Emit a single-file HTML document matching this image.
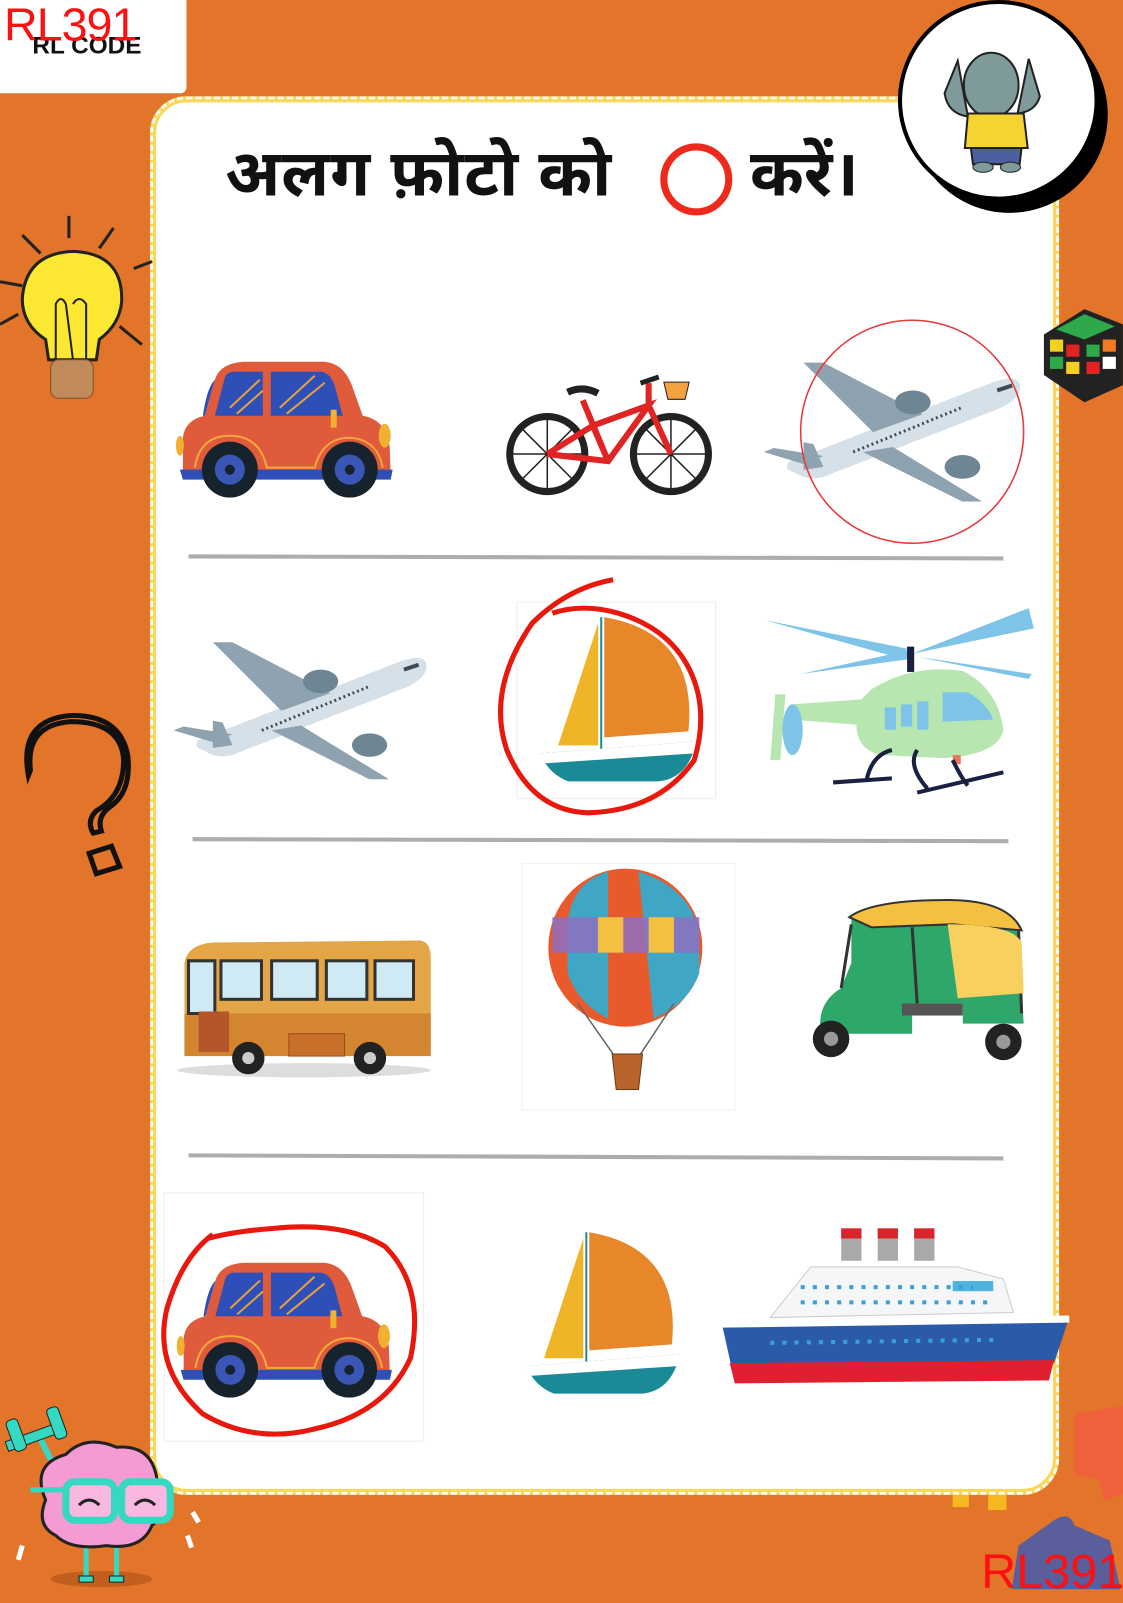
<!DOCTYPE html>
<html><head><meta charset="utf-8">
<style>
html,body{margin:0;padding:0;}
body{width:1123px;height:1589px;background:#E2752A;position:relative;overflow:hidden;font-family:"Liberation Sans",sans-serif;}
#wrap{position:absolute;left:0;top:0;width:1108px;height:1568px;transform:scale(1.0135);transform-origin:0 0;}
.codebox{position:absolute;left:0;top:0;width:184px;height:92px;background:#fff;border-radius:0 0 6px 0;}
.rl{position:absolute;left:4px;top:-6px;color:#ff1010;font-size:46px;line-height:60px;letter-spacing:-1px;}
.rlc{position:absolute;left:32px;top:32px;font-weight:bold;font-size:24px;color:#111;}
.card{position:absolute;left:148px;top:95px;width:885px;height:1368px;background:#fff;border:6px solid #F8D75A;border-radius:36px;}
.card:after{content:"";position:absolute;left:-6px;top:-6px;right:-6px;bottom:-6px;border:3px dashed #fff;border-radius:36px;opacity:.9;}
.title{position:absolute;top:134px;font-size:64px;font-weight:bold;color:#111;font-family:"Liberation Sans","Noto Sans Devanagari","Lohit Devanagari",sans-serif;white-space:nowrap;}
svg{position:absolute;left:0;top:0;}
.rl2{position:absolute;left:968px;top:1522px;color:#ff1010;font-size:48px;line-height:60px;}
</style></head><body><div id="wrap">
<div class="codebox"><div class="rlc">RL CODE</div><div class="rl">RL391</div></div>
<div class="card"></div>
<svg width="1108" height="1568" viewBox="0 0 1108 1568">
<defs>
<symbol id="car" viewBox="0 0 220 140">
 <path d="M8 115 L8 80 Q10 62 30 58 L40 22 Q45 5 70 4 L150 4 Q170 6 178 30 L188 58 Q212 62 215 90 L216 118 Z" fill="#E05A3C"/>
 <path d="M5 112 L218 112 L216 122 L8 122 Z" fill="#2E4FB8"/>
 <path d="M40 58 L50 20 Q52 14 60 14 L88 14 L88 58 Z" fill="#2E4FB8"/>
 <path d="M96 58 L96 14 L145 14 Q155 14 160 28 L168 58 Z" fill="#2E4FB8"/>
 <path d="M30 58 L40 22 Q32 30 28 58 Z" fill="#2E4FB8"/>
 <path d="M55 50 L85 22 M62 56 L88 33 M105 50 L140 18 M112 56 L150 25" stroke="#E8A23A" stroke-width="2"/>
 <path d="M20 110 Q25 78 55 78 Q85 78 92 110 L140 110 Q148 80 175 80 Q203 82 208 110" fill="none" stroke="#F2A93B" stroke-width="2"/>
 <circle cx="55" cy="112" r="28" fill="#16222c"/><circle cx="55" cy="112" r="15" fill="#3A57B8"/><circle cx="55" cy="112" r="5" fill="#16222c"/>
 <circle cx="175" cy="112" r="28" fill="#16222c"/><circle cx="175" cy="112" r="15" fill="#3A57B8"/><circle cx="175" cy="112" r="5" fill="#16222c"/>
 <ellipse cx="210" cy="78" rx="6" ry="12" fill="#F2B030"/><ellipse cx="5" cy="88" rx="4" ry="10" fill="#F2B030"/>
 <rect x="156" y="52" width="6" height="18" fill="#F2B030"/>
</symbol>
<symbol id="plane" viewBox="0 0 260 150">
 <path d="M30 120 Q20 118 25 110 L230 30 Q258 20 258 35 Q258 45 240 55 L60 125 Q45 130 30 120 Z" fill="#D5E0E8"/>
 <path d="M110 80 L40 10 L60 10 L160 62 Z" fill="#8FA2B0"/>
 <path d="M130 95 L220 150 L200 150 L100 100 Z" fill="#8FA2B0"/>
 <path d="M40 112 L0 100 L10 96 L60 104 Z" fill="#8FA2B0"/>
 <path d="M40 118 L40 90 L50 92 L60 115 Z" fill="#8FA2B0"/>
 <ellipse cx="150" cy="50" rx="18" ry="12" fill="#6E8594"/>
 <ellipse cx="200" cy="115" rx="18" ry="12" fill="#6E8594"/>
 <path d="M90 100 L200 55" stroke="#3b4a55" stroke-width="3" stroke-dasharray="2 3"/>
 <path d="M235 38 L250 33" stroke="#3b4a55" stroke-width="4"/>
</symbol>
<symbol id="boat" viewBox="0 0 160 170">
 <path d="M60 10 L60 132 L20 132 Z" fill="#F0B429"/>
 <path d="M66 4 Q160 20 150 118 L66 124 Z" fill="#E8872A"/>
 <path d="M63 4 L63 140" stroke="#1A8A96" stroke-width="2"/>
 <path d="M2 140 L158 128 Q150 165 120 168 L30 168 Q10 160 2 140 Z" fill="#1A8A96"/>
 <path d="M2 140 L158 128 L156 140 L6 150 Z" fill="#fff"/>
</symbol>
</defs>
<circle cx="687" cy="177" r="32" fill="none" stroke="#EE2A1C" stroke-width="7"/>
<!-- elephant badge -->
<circle cx="996" cy="113" r="97" fill="#000"/>
<circle cx="985" cy="99" r="97" fill="#fff" stroke="#000" stroke-width="4"/>
<g>
 <path d="M945 60 L932 92 Q935 112 955 115 Z M1015 58 L1026 95 Q1022 110 1004 112 Z" fill="#7E9A9A" stroke="#222" stroke-width="2"/>
 <ellipse cx="978" cy="84" rx="27" ry="32" fill="#7E9A9A" stroke="#222" stroke-width="2"/>
 <path d="M955 112 L1010 112 L1014 146 L952 146 Z" fill="#F5D431" stroke="#222" stroke-width="2"/>
 <path d="M958 146 L1008 146 L1006 162 L960 162 Z" fill="#4C5FA0" stroke="#222" stroke-width="2"/>
 <ellipse cx="970" cy="165" rx="10" ry="5" fill="#7E9A9A" stroke="#222"/>
 <ellipse cx="997" cy="165" rx="10" ry="5" fill="#7E9A9A" stroke="#222"/>
</g>
<line x1="186" y1="549" x2="990" y2="551" stroke="#ADADAD" stroke-width="4"/>
<line x1="190" y1="828" x2="995" y2="830" stroke="#ADADAD" stroke-width="4"/>
<line x1="186" y1="1140" x2="990" y2="1143" stroke="#ADADAD" stroke-width="4"/>
<use href="#car" x="172" y="353" width="218" height="138"/>
<g stroke="#222" fill="none">
 <circle cx="540" cy="448" r="37" stroke-width="7"/><circle cx="662" cy="448" r="37" stroke-width="7"/>
 <path d="M540 448 L540 413 M540 448 L515 423 M540 448 L505 448 M540 448 L515 473 M540 448 L540 483 M540 448 L565 473 M540 448 L575 448 M540 448 L565 423 M662 448 L662 413 M662 448 L637 423 M662 448 L627 448 M662 448 L637 473 M662 448 L662 483 M662 448 L687 473 M662 448 L697 448 M662 448 L687 423" stroke-width="1.5"/>
</g>
<path d="M540 448 L600 455 L640 400 L585 420 L540 448 M585 420 L600 455 M575 395 L600 455 M640 400 L662 448 M640 400 L640 378" stroke="#E02424" stroke-width="6" fill="none"/>
<path d="M560 387 Q575 380 590 388" stroke="#222" stroke-width="7" fill="none"/>
<path d="M632 378 L650 372" stroke="#222" stroke-width="5"/>
<path d="M655 377 L680 377 L676 394 L659 394 Z" fill="#F4A240" stroke="#222"/>
<use href="#plane" x="752" y="348" width="258" height="147"/>
<circle cx="900" cy="426" r="110" fill="none" stroke="#E8383A" stroke-width="1.5"/>
<use href="#plane" x="168" y="624" width="258" height="145"/>
<rect x="510" y="594" width="196" height="194" fill="none" stroke="#eee" stroke-width="1"/>
<use href="#boat" x="530" y="605" width="160" height="168"/>
<path d="M605 572 Q560 580 525 615 Q480 680 500 740 Q525 800 580 802 Q650 800 685 750 Q700 700 680 660 Q660 620 610 605 Q575 595 545 605" fill="none" stroke="#E8180C" stroke-width="5"/>
<g>
 <path d="M755 612 L895 640 L890 650 Z M900 645 L1015 600 L1020 620 Z M790 665 L895 642 L900 650 Z M905 648 L1018 665 L1015 670 Z" fill="#7EC4E8"/>
 <rect x="895" y="638" width="7" height="25" fill="#1a2040"/>
 <path d="M860 680 Q900 655 950 662 Q985 680 990 720 Q985 745 930 748 L870 745 Q845 740 845 715 L780 710 L780 695 L850 690 Z" fill="#B8E6B0"/>
 <path d="M765 685 L775 685 L770 750 L760 750 Z" fill="#B8E6B0"/>
 <ellipse cx="782" cy="720" rx="10" ry="25" fill="#7EC4E8"/>
 <rect x="873" y="698" width="11" height="22" fill="#7EC4E8"/><rect x="889" y="695" width="11" height="22" fill="#7EC4E8"/><rect x="905" y="692" width="11" height="28" fill="#7EC4E8"/>
 <path d="M930 683 L955 683 Q975 695 980 710 L930 712 Z" fill="#7EC4E8"/>
 <rect x="940" y="745" width="8" height="9" fill="#E8785A"/>
 <path d="M822 772 L880 768 M880 740 Q860 745 855 770 M905 740 Q895 755 915 778 M905 782 L990 762 M940 750 Q950 770 955 775" stroke="#1a2040" stroke-width="4" fill="none"/>
</g>
<g>
 <path d="M182 950 Q185 932 210 930 L415 928 Q425 930 425 945 L425 1040 L182 1040 Z" fill="#E3A545"/>
 <path d="M182 1000 L425 1000 L425 1042 L182 1042 Z" fill="#D38530"/>
 <rect x="218" y="948" width="40" height="38" fill="#CFE9F5" stroke="#333" stroke-width="3"/>
 <rect x="268" y="948" width="45" height="38" fill="#CFE9F5" stroke="#333" stroke-width="3"/>
 <rect x="322" y="948" width="40" height="38" fill="#CFE9F5" stroke="#333" stroke-width="3"/>
 <rect x="370" y="948" width="38" height="38" fill="#CFE9F5" stroke="#333" stroke-width="3"/>
 <path d="M186 948 L212 948 L212 1000 L186 1000 Z" fill="#CFE9F5" stroke="#333" stroke-width="3"/>
 <rect x="196" y="998" width="30" height="40" fill="#B5562A"/>
 <rect x="285" y="1020" width="55" height="22" fill="#C8702A" stroke="#9a4d1a"/>
 <ellipse cx="300" cy="1056" rx="125" ry="7" fill="#ddd"/>
 <circle cx="245" cy="1044" r="16" fill="#222"/><circle cx="245" cy="1044" r="6" fill="#ccc"/>
 <circle cx="365" cy="1044" r="16" fill="#222"/><circle cx="365" cy="1044" r="6" fill="#ccc"/>
</g>
<rect x="515" y="852" width="210" height="243" fill="none" stroke="#f0f0f0"/>
<g>
 <ellipse cx="617" cy="935" rx="76" ry="78" fill="#E85A2C"/>
 <path d="M560 910 Q565 870 600 860 L600 1005 Q570 990 560 960 Z" fill="#3FA6C4"/>
 <path d="M630 860 Q680 875 690 920 L690 960 Q680 990 645 1005 Z" fill="#3FA6C4"/>
 <rect x="545" y="905" width="145" height="35" fill="#8E6FC1" opacity=".85"/>
 <rect x="590" y="905" width="25" height="35" fill="#F4C040"/><rect x="640" y="905" width="25" height="35" fill="#F4C040"/>
 <path d="M570 990 L605 1040 M665 990 L632 1040" stroke="#666" stroke-width="1.5"/>
 <path d="M604 1040 L634 1040 L630 1075 L608 1075 Z" fill="#B8642A" stroke="#6a3a14"/>
</g>
<g>
 <path d="M840 905 Q860 890 930 890 Q990 890 1005 915 L1010 1010 L950 1010 L950 990 L900 990 L900 1020 L810 1020 Q805 990 830 975 L840 950 Z" fill="#2EA86A"/>
 <path d="M838 905 Q860 888 935 888 Q995 888 1008 918 L940 912 L860 915 Z" fill="#F5C040" stroke="#333" stroke-width="2"/>
 <path d="M840 912 L830 975 M900 915 L905 990 M1005 918 L1008 1000" stroke="#333" stroke-width="3"/>
 <path d="M935 912 Q1000 912 1008 930 L1010 980 L945 985 Z" fill="#F8D060"/>
 <circle cx="820" cy="1025" r="18" fill="#222"/><circle cx="820" cy="1025" r="7" fill="#999"/>
 <circle cx="990" cy="1028" r="18" fill="#222"/><circle cx="990" cy="1028" r="7" fill="#999"/>
 <rect x="890" y="990" width="60" height="12" fill="#555"/>
</g>
<rect x="162" y="1177" width="256" height="245" fill="none" stroke="#eee"/>
<use href="#car" x="172" y="1242" width="218" height="137"/>
<path d="M210 1218 Q180 1240 165 1290 Q150 1350 200 1395 Q250 1425 310 1410 Q380 1395 405 1340 Q420 1270 380 1230 Q340 1205 270 1212 Q230 1215 205 1222" fill="none" stroke="#E8180C" stroke-width="5"/>
<use href="#boat" x="516" y="1212" width="158" height="165"/>
<g>
 <rect x="830" y="1212" width="20" height="32" fill="#A9A9A9"/><rect x="830" y="1212" width="20" height="10" fill="#D8242B"/>
 <rect x="866" y="1212" width="20" height="32" fill="#A9A9A9"/><rect x="866" y="1212" width="20" height="10" fill="#D8242B"/>
 <rect x="902" y="1212" width="20" height="32" fill="#A9A9A9"/><rect x="902" y="1212" width="20" height="10" fill="#D8242B"/>
 <path d="M800 1250 L945 1250 L990 1262 L1000 1295 L760 1300 Z" fill="#F4F6F8" stroke="#ccc"/>
 <rect x="940" y="1264" width="40" height="10" fill="#4FB3E0"/>
 <path d="M712 1305 L1055 1300 L1040 1345 L722 1350 Z" fill="#2B5BA8"/>
 <path d="M720 1345 L1040 1342 L1035 1362 L725 1365 Z" fill="#E02030"/>
 <path d="M712 1303 L1055 1298 L1055 1305 L712 1310 Z" fill="#fff"/>
 <path d="M790 1270 L960 1270 M790 1285 L975 1285 M760 1325 L980 1322" stroke="#3AA0D8" stroke-width="4" stroke-dasharray="4 8"/>
</g>
<g>
 <path d="M68 213 L68 235 M22 232 L40 250 M112 225 L98 245 M0 278 L22 282 M132 265 L150 258 M0 320 L18 310 M118 322 L140 340" stroke="#222" stroke-width="3"/>
 <path d="M72 248 Q122 250 120 298 Q118 320 98 335 L95 355 L48 355 L45 335 Q22 320 22 295 Q25 250 72 248 Z" fill="#FCE732" stroke="#222" stroke-width="3"/>
 <path d="M55 355 L55 300 Q60 290 65 300 L72 355 M85 355 L85 300 Q78 290 72 300" stroke="#222" stroke-width="2" fill="none"/>
 <rect x="50" y="355" width="42" height="38" rx="8" fill="#C08A5A" stroke="#7a5030"/>
</g>
<g fill="none" stroke="#111" stroke-width="5">
 <path d="M30 760 Q25 715 70 712 Q120 712 122 750 Q122 785 95 800 Q85 810 92 822 L100 820 Q95 805 110 795 Q130 780 126 745 Q118 705 70 706 Q18 710 28 765 Z"/>
 <path d="M88 842 L110 835 L118 855 L95 862 Z"/>
</g>
<g>
 <path d="M1030 330 L1070 305 L1108 320 L1108 380 L1070 397 L1030 370 Z" fill="#222"/>
 <rect x="1036" y="335" width="13" height="12" fill="#F4D020"/><rect x="1052" y="340" width="13" height="12" fill="#E02424"/>
 <rect x="1036" y="352" width="13" height="12" fill="#2DA84A"/><rect x="1052" y="357" width="13" height="12" fill="#F4D020"/>
 <rect x="1072" y="340" width="13" height="12" fill="#2DA84A"/><rect x="1088" y="335" width="13" height="12" fill="#F47A20"/>
 <rect x="1072" y="357" width="13" height="12" fill="#E02424"/><rect x="1088" y="352" width="13" height="12" fill="#fff"/>
 <path d="M1042 325 L1070 310 L1100 322 L1070 335 Z" fill="#2DA84A"/>
</g>
<!-- brain -->
<g>
 <ellipse cx="100" cy="1558" rx="50" ry="8" fill="#B5561A" opacity=".7"/>
 <path d="M85 1520 L85 1555 M115 1520 L115 1555" stroke="#35D8C0" stroke-width="5"/>
 <path d="M78 1555 h14 v6 h-14z M108 1555 h14 v6 h-14z" fill="#35D8C0" stroke="#222"/>
 <path d="M45 1480 Q30 1445 65 1435 Q85 1415 115 1428 Q150 1425 155 1460 Q170 1490 150 1505 Q140 1530 105 1525 Q70 1530 55 1515 Q35 1505 45 1480 Z" fill="#F49BD4" stroke="#222" stroke-width="3"/>
 <path d="M30 1470 L155 1470" stroke="#35D8C0" stroke-width="5"/>
 <rect x="65" y="1462" width="48" height="38" rx="9" fill="#F8B8E0" stroke="#35D8C0" stroke-width="7"/>
 <rect x="120" y="1462" width="48" height="38" rx="9" fill="#F8B8E0" stroke="#35D8C0" stroke-width="7"/>
 <path d="M78 1485 q10 -10 20 0 M133 1485 q10 -10 20 0" stroke="#222" stroke-width="3" fill="none"/>
 <path d="M50 1440 L40 1420" stroke="#35D8C0" stroke-width="6"/>
 <rect x="5" y="1412" width="60" height="10" fill="#35D8C0" stroke="#222" transform="rotate(-20 35 1417)"/>
 <rect x="10" y="1400" width="12" height="32" rx="4" fill="#35D8C0" stroke="#222" transform="rotate(-20 16 1416)"/>
 <rect x="50" y="1388" width="12" height="32" rx="4" fill="#35D8C0" stroke="#222" transform="rotate(-20 56 1404)"/>
 <path d="M22 1525 l-4 14 M190 1492 l6 10 M185 1515 l4 12" stroke="#fff" stroke-width="5"/>
</g>
<path d="M1060 1395 L1123 1385 L1123 1470 L1090 1480 L1085 1460 L1060 1455 Z" fill="#F0603A"/>
<rect x="940" y="1475" width="16" height="12" fill="#F5B820"/><rect x="975" y="1475" width="18" height="15" fill="#F5B820"/>
<path d="M1040 1500 Q1055 1490 1060 1505 L1095 1520 L1110 1589 L995 1589 L1005 1525 Z" fill="#5A5E9A"/>
</svg>
<div class="title" style="left:222px;letter-spacing:1px">अलग फ़ोटो को</div>
<div class="title" style="left:740px">करें।</div>
<div class="rl2">RL391</div>
</div></body></html>
